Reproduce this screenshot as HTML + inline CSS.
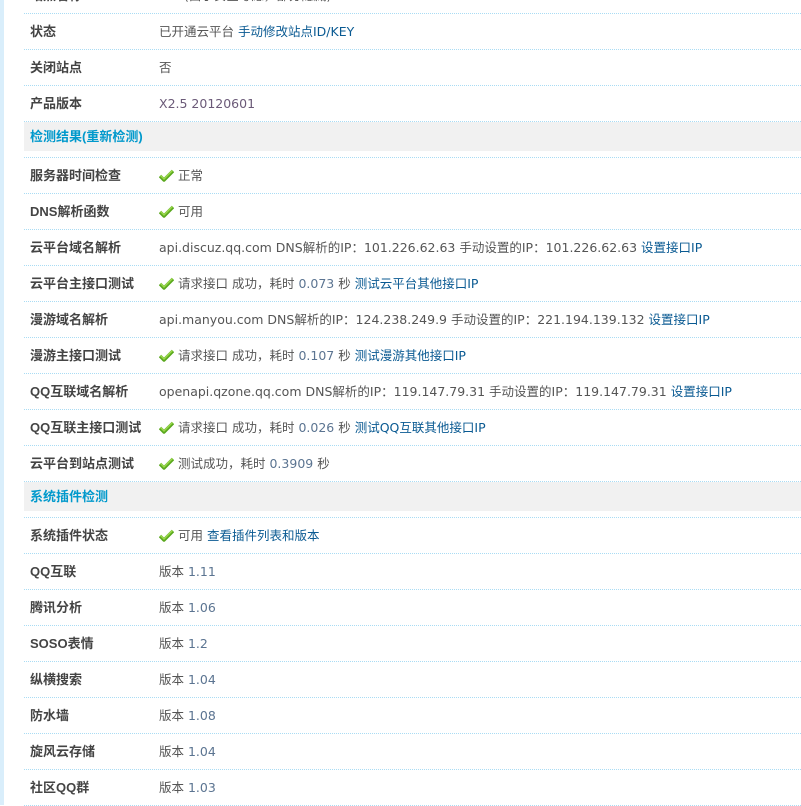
<!DOCTYPE html>
<html><head><meta charset="utf-8"><style>
html,body{margin:0;padding:0;width:801px;height:805px;overflow:hidden;background:#fff;font-family:"DejaVu Sans","Noto Sans CJK SC",sans-serif;font-size:12.5px;}
#bar{position:absolute;left:0;top:0;width:4px;height:805px;background:#d9eefb;}
#wrap{position:absolute;left:24px;top:-22px;right:0;}
.r{height:36px;position:relative;line-height:35px;white-space:nowrap;background:repeating-linear-gradient(to right,#a9dcf4 0,#a9dcf4 1px,transparent 1px,transparent 2px) left bottom/100% 1px no-repeat;}
.l{position:absolute;left:6px;font-weight:bold;color:#444;font-family:"Liberation Sans","Noto Sans CJK SC",sans-serif;font-size:13px;}
.v{position:absolute;left:135px;color:#555;}
.h{background:linear-gradient(#f1f1f1,#f1f1f1) left top/100% 29px no-repeat,repeating-linear-gradient(to right,#a9dcf4 0,#a9dcf4 1px,transparent 1px,transparent 2px) left bottom/100% 1px no-repeat;}
.h .l{color:#09c;top:-3px;}
a{color:#0a5a92;text-decoration:none;}
.n{color:#5b7491;}
.ck{display:inline-block;width:15px;height:13px;vertical-align:-2px;margin-right:4px;}
</style></head><body>
<div id="bar"></div>
<div id="wrap">
<div class="r"><span class="l">站点名称</span><span class="v" style="left:160px">(由于安全考虑，部分隐藏)</span></div>
<div class="r"><span class="l">状态</span><span class="v">已开通云平台 <a>手动修改站点ID/KEY</a></span></div>
<div class="r"><span class="l">关闭站点</span><span class="v">否</span></div>
<div class="r"><span class="l">产品版本</span><span class="v" style="color:#6b5a78">X2.5 20120601</span></div>
<div class="r h"><span class="l">检测结果(重新检测)</span></div>
<div class="r"><span class="l">服务器时间检查</span><span class="v"><svg class="ck" viewBox="0 0 15 13"><path d="M1 7 L5 11 L14 2" fill="none" stroke="#5aa81e" stroke-width="3.4" stroke-linejoin="round"/><path d="M1.5 6.5 L5 10 L13.5 1.5" fill="none" stroke="#9ad84a" stroke-width="1.4"/></svg>正常</span></div>
<div class="r"><span class="l">DNS解析函数</span><span class="v"><svg class="ck" viewBox="0 0 15 13"><path d="M1 7 L5 11 L14 2" fill="none" stroke="#5aa81e" stroke-width="3.4" stroke-linejoin="round"/><path d="M1.5 6.5 L5 10 L13.5 1.5" fill="none" stroke="#9ad84a" stroke-width="1.4"/></svg>可用</span></div>
<div class="r"><span class="l">云平台域名解析</span><span class="v">api.discuz.qq.com DNS解析的IP：101.226.62.63 手动设置的IP：101.226.62.63 <a>设置接口IP</a></span></div>
<div class="r"><span class="l">云平台主接口测试</span><span class="v"><svg class="ck" viewBox="0 0 15 13"><path d="M1 7 L5 11 L14 2" fill="none" stroke="#5aa81e" stroke-width="3.4" stroke-linejoin="round"/><path d="M1.5 6.5 L5 10 L13.5 1.5" fill="none" stroke="#9ad84a" stroke-width="1.4"/></svg>请求接口 成功，耗时 <span class="n">0.073</span> 秒 <a>测试云平台其他接口IP</a></span></div>
<div class="r"><span class="l">漫游域名解析</span><span class="v">api.manyou.com DNS解析的IP：124.238.249.9 手动设置的IP：221.194.139.132 <a>设置接口IP</a></span></div>
<div class="r"><span class="l">漫游主接口测试</span><span class="v"><svg class="ck" viewBox="0 0 15 13"><path d="M1 7 L5 11 L14 2" fill="none" stroke="#5aa81e" stroke-width="3.4" stroke-linejoin="round"/><path d="M1.5 6.5 L5 10 L13.5 1.5" fill="none" stroke="#9ad84a" stroke-width="1.4"/></svg>请求接口 成功，耗时 <span class="n">0.107</span> 秒 <a>测试漫游其他接口IP</a></span></div>
<div class="r"><span class="l">QQ互联域名解析</span><span class="v">openapi.qzone.qq.com DNS解析的IP：119.147.79.31 手动设置的IP：119.147.79.31 <a>设置接口IP</a></span></div>
<div class="r"><span class="l">QQ互联主接口测试</span><span class="v"><svg class="ck" viewBox="0 0 15 13"><path d="M1 7 L5 11 L14 2" fill="none" stroke="#5aa81e" stroke-width="3.4" stroke-linejoin="round"/><path d="M1.5 6.5 L5 10 L13.5 1.5" fill="none" stroke="#9ad84a" stroke-width="1.4"/></svg>请求接口 成功，耗时 <span class="n">0.026</span> 秒 <a>测试QQ互联其他接口IP</a></span></div>
<div class="r"><span class="l">云平台到站点测试</span><span class="v"><svg class="ck" viewBox="0 0 15 13"><path d="M1 7 L5 11 L14 2" fill="none" stroke="#5aa81e" stroke-width="3.4" stroke-linejoin="round"/><path d="M1.5 6.5 L5 10 L13.5 1.5" fill="none" stroke="#9ad84a" stroke-width="1.4"/></svg>测试成功，耗时 <span class="n">0.3909</span> 秒</span></div>
<div class="r h"><span class="l">系统插件检测</span></div>
<div class="r"><span class="l">系统插件状态</span><span class="v"><svg class="ck" viewBox="0 0 15 13"><path d="M1 7 L5 11 L14 2" fill="none" stroke="#5aa81e" stroke-width="3.4" stroke-linejoin="round"/><path d="M1.5 6.5 L5 10 L13.5 1.5" fill="none" stroke="#9ad84a" stroke-width="1.4"/></svg>可用 <a>查看插件列表和版本</a></span></div>
<div class="r"><span class="l">QQ互联</span><span class="v">版本 <span class="n">1.11</span></span></div>
<div class="r"><span class="l">腾讯分析</span><span class="v">版本 <span class="n">1.06</span></span></div>
<div class="r"><span class="l">SOSO表情</span><span class="v">版本 <span class="n">1.2</span></span></div>
<div class="r"><span class="l">纵横搜索</span><span class="v">版本 <span class="n">1.04</span></span></div>
<div class="r"><span class="l">防水墙</span><span class="v">版本 <span class="n">1.08</span></span></div>
<div class="r"><span class="l">旋风云存储</span><span class="v">版本 <span class="n">1.04</span></span></div>
<div class="r"><span class="l">社区QQ群</span><span class="v">版本 <span class="n">1.03</span></span></div>
</div>
</body></html>
